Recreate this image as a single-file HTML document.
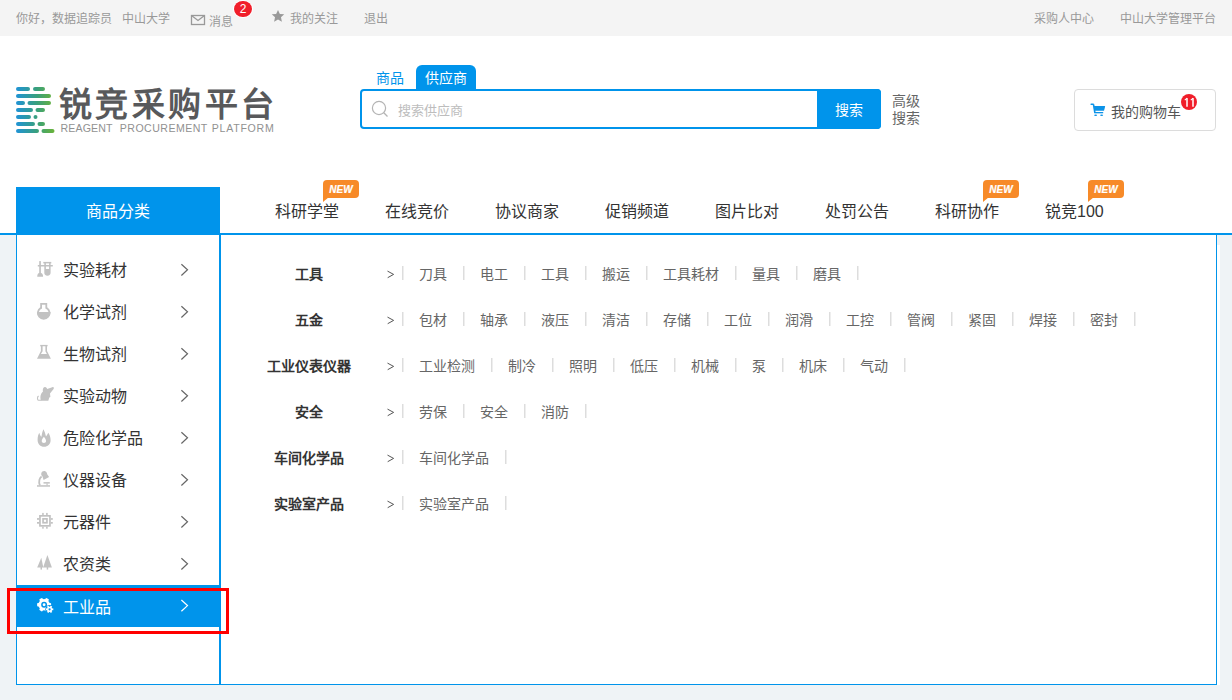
<!DOCTYPE html>
<html lang="zh-CN">
<head>
<meta charset="utf-8">
<style>
*{margin:0;padding:0;box-sizing:border-box}
html,body{width:1232px;height:700px;overflow:hidden}
body{position:relative;font-family:"Liberation Sans",sans-serif;background:#eff3f6;color:#333}
.a{position:absolute;white-space:nowrap}
#top{position:absolute;left:0;top:0;width:1232px;height:36px;background:#f4f4f4;font-size:12px;color:#999}
#top .a{line-height:17px}
#hdr{position:absolute;left:0;top:36px;width:1232px;height:197px;background:#fff}
#line{position:absolute;left:0;top:233px;width:1232px;height:2px;background:#0094eb}
.blue{background:#0094eb}
#side{position:absolute;left:16px;top:235px;width:204px;height:450px;background:#fff;border:1px solid #0094eb;border-top:0}
#main{position:absolute;left:220px;top:235px;width:997px;height:450px;background:#fff;border:1px solid #0094eb;border-top:0}
.nav{font-size:16px;color:#333;line-height:20px;top:202px}
.new{position:absolute;width:36px;height:18px;background:#f78a28;border-radius:4px 4px 4px 0;color:#fff;font:italic bold 10px/19px "Liberation Sans",sans-serif;text-align:center;top:180px;-webkit-text-stroke:0.2px #fff}
.new:after{content:"";position:absolute;left:0;top:17px;border-left:6px solid #f78a28;border-bottom:5px solid transparent}
.si{position:absolute;left:0;width:204px;height:42px}
.si .t{position:absolute;left:46px;top:12px;font-size:16px;line-height:20px;color:#333}
.si .ar{position:absolute;left:160px;top:14px;width:14px;height:14px}
.si .ic{position:absolute;left:15px;top:6px;width:26px;height:26px}
.row{position:absolute;left:0;height:20px;font-size:14px;line-height:20px}
.row .c{position:absolute;width:120px;left:28px;text-align:center;font-weight:bold;color:#333}
.row .gt{position:absolute;left:164px;top:0}
.row .its{position:absolute;left:181px;top:0;display:flex;color:#666;white-space:nowrap;width:900px}
.row .its span{padding:0 16px;position:relative;flex:none}
.row .its .s{width:1px;height:14px;background:#ddd;box-shadow:1px 0 0 #eee;padding:0;margin-top:2px;flex:none}
</style>
</head>
<body>
<div id="top">
  <div class="a" style="left:16px;top:11px">你好，数据追踪员</div>
  <div class="a" style="left:122px;top:11px">中山大学</div>
  <svg class="a" style="left:190px;top:13.5px" width="16" height="12" viewBox="0 0 16 12"><rect x="1.5" y="1.5" width="13" height="9" fill="none" stroke="#999" stroke-width="1.3"/><path d="M1.5 1.5 L8 6.5 L14.5 1.5" fill="none" stroke="#999" stroke-width="1.3"/></svg>
  <div class="a" style="left:209px;top:14px">消息</div>
  <div class="a" style="left:234px;top:0.5px;width:18px;height:16.5px;border-radius:50%;background:#f01e2a;box-shadow:0 0 0 1px #fff;color:#fff;text-align:center;line-height:17px;font-size:12px">2</div>
  <svg class="a" style="left:271px;top:8.5px" width="14" height="14" viewBox="0 0 24 24"><path d="M12 1.5l3.2 6.9 7.5.8-5.6 5.1 1.6 7.4L12 17.9l-6.7 3.8 1.6-7.4-5.6-5.1 7.5-.8z" fill="#999"/></svg>
  <div class="a" style="left:290px;top:11px">我的关注</div>
  <div class="a" style="left:364px;top:11px">退出</div>
  <div class="a" style="left:1034px;top:11px">采购人中心</div>
  <div class="a" style="left:1120px;top:11px">中山大学管理平台</div>
</div>
<div id="hdr">
  <svg class="a" style="left:14px;top:50px" width="44" height="50" viewBox="14 86 44 50">
    <defs><linearGradient id="g" x1="16" y1="0" x2="55" y2="0" gradientUnits="userSpaceOnUse"><stop offset="0" stop-color="#1f93d6"/><stop offset="0.55" stop-color="#3aa07a"/><stop offset="1" stop-color="#6cb436"/></linearGradient></defs>
    <g stroke="url(#g)" stroke-width="4" stroke-linecap="round" fill="none">
      <path d="M18 89H28M35 89H43"/>
      <path d="M18 96H49"/>
      <path d="M18 103H23M29.5 103H49"/>
      <path d="M18 110H31M37.5 110H43"/>
      <path d="M18 117H29M35.5 117H35.5"/>
      <path d="M18 124H33M39.5 124H43"/>
      <path d="M18 131H37M43.5 131H52.5"/>
    </g>
  </svg>
  <div class="a" style="left:59px;top:49px;font-size:33px;line-height:40px;font-weight:900;color:#58595b;letter-spacing:3.4px">锐竞采购平台</div>
  <div class="a" style="left:60.6px;top:86px;font-size:10.6px;line-height:12px;color:#919191;letter-spacing:0.12px">REAGENT</div>
  <div class="a" style="left:119.8px;top:86px;font-size:10.6px;line-height:12px;color:#919191;letter-spacing:0.45px">PROCUREMENT</div>
  <div class="a" style="left:211.8px;top:86px;font-size:10.6px;line-height:12px;color:#919191;letter-spacing:0.72px">PLATFORM</div>

  <div class="a" style="left:376px;top:32px;font-size:14px;line-height:20px;color:#0094eb">商品</div>
  <div class="a" style="left:416px;top:29px;width:60px;height:25px;background:#0094eb;border-radius:6px 6px 0 0"></div>
  <div class="a" style="left:425px;top:32px;font-size:14px;line-height:20px;color:#fff">供应商</div>
  <div class="a" style="left:360px;top:53px;width:521px;height:40px;border:2px solid #0094eb;border-radius:4px;background:#fff"></div>
  <div class="a" style="left:817px;top:53px;width:64px;height:40px;background:#0094eb;border-radius:0 4px 4px 0"></div>
  <div class="a" style="left:835px;top:64px;font-size:14px;line-height:20px;color:#fff">搜索</div>
  <svg class="a" style="left:371px;top:64px" width="18" height="18" viewBox="0 0 18 18"><circle cx="8" cy="8" r="6.6" fill="none" stroke="#b4b4b4" stroke-width="1.2"/><path d="M12.8 12.8L16.5 16.5" stroke="#b4b4b4" stroke-width="1.3"/></svg>
  <div class="a" style="left:398px;top:64.5px;font-size:13px;line-height:20px;color:#bdbdbd">搜索供应商</div>
  <div class="a" style="left:892px;top:57px;font-size:14px;line-height:17px;color:#666;white-space:normal;width:30px">高级<br>搜索</div>

  <div class="a" style="left:1074px;top:53px;width:142px;height:42px;border:1px solid #dcdcdc;border-radius:4px;background:#fff"></div>
  <svg class="a" style="left:1086px;top:62px" width="24" height="24" viewBox="0 0 24 24"><g fill="#0c93e8"><path d="M5.2 6.3H7.2" stroke="#0c93e8" stroke-width="1.6" stroke-linecap="round"/><path d="M7.5 6.3L8.9 14.8" stroke="#0c93e8" stroke-width="1.6"/><path d="M7.9 8.1H18.7C19.1 8.1 19.2 8.4 19.1 8.8L18 12.7H8.5Z"/><rect x="8.2" y="14" width="9" height="1.3"/><ellipse cx="9.6" cy="17.2" rx="1.5" ry="0.75"/><ellipse cx="15.6" cy="17.2" rx="1.5" ry="0.75"/></g></svg>
  <div class="a" style="left:1111px;top:66px;font-size:14px;line-height:20px;color:#555">我的购物车</div>
  <svg class="a" style="left:1181px;top:58px" width="16" height="16" viewBox="0 0 16 16"><circle cx="8" cy="8" r="8" fill="#f01e2a"/><path d="M6 4.2V12.8M12 4.2V12.8" stroke="#fff" stroke-width="1.5"/><path d="M3.8 6.2L6.2 4.2M9.8 6.2L12.2 4.2" stroke="#fff" stroke-width="1.1"/></svg>

  <div class="a blue" style="left:16px;top:151px;width:204px;height:48px"></div>
  <div class="a" style="left:86px;top:165px;font-size:16px;line-height:22px;color:#fff">商品分类</div>
</div>
<div class="a nav" style="left:275px">科研学堂</div>
<div class="a nav" style="left:385px">在线竞价</div>
<div class="a nav" style="left:495px">协议商家</div>
<div class="a nav" style="left:605px">促销频道</div>
<div class="a nav" style="left:715px">图片比对</div>
<div class="a nav" style="left:825px">处罚公告</div>
<div class="a nav" style="left:935px">科研协作</div>
<div class="a nav" style="left:1045px">锐竞100</div>
<div class="new" style="left:323px">NEW</div>
<div class="new" style="left:983px">NEW</div>
<div class="new" style="left:1088px">NEW</div>
<div id="line"></div>
<div class="a" style="left:1217px;top:245px;width:3px;height:440px;background:#fff"></div>
<div id="side">
  <div class="si" style="top:14px"><svg class="ic" width="26" height="26" viewBox="0 0 26 26"><rect x="7.2" y="6.1" width="1.7" height="13" fill="#c2c2c2"/><path d="M5.2 21.7H11.1C11.1 19.3 9.9 17.8 8.05 17.8C6.3 17.8 5.2 19.3 5.2 21.7Z" fill="#c2c2c2"/><rect x="5.8" y="10" width="15" height="1.5" fill="#c2c2c2"/><rect x="11.3" y="6.9" width="8" height="1.5" fill="#c2c2c2"/><path d="M12.3 7.4V17.6A3.15 3.15 0 0 0 18.6 17.6V7.4H17.1V13.9H13.9V7.4Z" fill="#c2c2c2"/></svg><div class="t">实验耗材</div><svg class="ar" width="14" height="14" viewBox="0 0 14 14"><path d="M4.4 1.2L10.5 6.8L4.4 12.5" fill="none" stroke="#666" stroke-width="1.2"/></svg></div>
  <div class="si" style="top:56px"><svg class="ic" width="26" height="26" viewBox="0 0 26 26"><path d="M8.2 5.9H15.2V10.2A6.75 6.75 0 1 1 8.2 10.2Z" fill="#c2c2c2"/><path d="M10 7.7H13.4V11.4A4.95 4.95 0 1 1 10 11.4Z" fill="#fff"/><path d="M5.2 14.9A6.7 6.7 0 0 0 18.6 14.9Z" fill="#c2c2c2"/></svg><div class="t">化学试剂</div><svg class="ar" width="14" height="14" viewBox="0 0 14 14"><path d="M4.4 1.2L10.5 6.8L4.4 12.5" fill="none" stroke="#666" stroke-width="1.2"/></svg></div>
  <div class="si" style="top:98px"><svg class="ic" width="26" height="26" viewBox="0 0 26 26"><rect x="8.2" y="5.9" width="7.4" height="1.4" fill="#c2c2c2"/><path d="M8.9 7H15V11.9L18.9 19.7H5L8.9 11.9Z" fill="#c2c2c2"/><path d="M10.6 7.2H13.4V12.2L14.9 14.9H8.9L10.6 12.2Z" fill="#fff"/></svg><div class="t">生物试剂</div><svg class="ar" width="14" height="14" viewBox="0 0 14 14"><path d="M4.4 1.2L10.5 6.8L4.4 12.5" fill="none" stroke="#666" stroke-width="1.2"/></svg></div>
  <div class="si" style="top:140px"><svg class="ic" width="26" height="26" viewBox="0 0 26 26"><path d="M9 19.7C8 17 8.2 12.8 11 10.6C10.4 8.6 11 6.1 12.8 5.9C14.3 5.8 14.9 7 15.1 8L20.3 6.2C21.8 5.8 22.2 6.9 21.6 7.9L18 12.6L18.4 16L17.3 16.6L16.3 19.7Z" fill="#c2c2c2"/><path d="M9.2 19.3H6.6C5.2 19 5 16 6.6 15.1" fill="none" stroke="#c2c2c2" stroke-width="1.1"/></svg><div class="t">实验动物</div><svg class="ar" width="14" height="14" viewBox="0 0 14 14"><path d="M4.4 1.2L10.5 6.8L4.4 12.5" fill="none" stroke="#666" stroke-width="1.2"/></svg></div>
  <div class="si" style="top:182px"><svg class="ic" width="26" height="26" viewBox="0 0 26 26"><path d="M5.6 17C5.6 13.2 6.4 11.2 7.4 9.7C7.8 11.8 8.5 13.1 9.5 13.8C9.9 10.6 10.5 8.1 11.5 6.3C12.6 8.5 13.5 11 14 13.4C14.8 12.4 15.6 11 16.3 9.7C17.6 11.5 18.6 14 18.6 17.5C18.6 21.2 15.7 23.8 12.1 23.8C8.5 23.8 5.6 21.1 5.6 17Z" fill="#c2c2c2"/><path d="M11.9 13.7C12.8 15 14.1 16.5 14.1 18C14.1 19.2 13.1 20 11.9 20C10.7 20 9.7 19.2 9.7 18C9.7 16.5 11 15 11.9 13.7Z" fill="#fff"/></svg><div class="t">危险化学品</div><svg class="ar" width="14" height="14" viewBox="0 0 14 14"><path d="M4.4 1.2L10.5 6.8L4.4 12.5" fill="none" stroke="#666" stroke-width="1.2"/></svg></div>
  <div class="si" style="top:224px"><svg class="ic" width="26" height="26" viewBox="0 0 26 26"><path d="M9.3 8.2C9.8 6.3 11.6 5.6 13.2 6.2C14.6 6.8 15 7.8 15.2 9.2L17.1 12.1L11.6 14.9L10.5 11.6C9.4 10.6 9 9.4 9.3 8.2Z" fill="#c2c2c2"/><path d="M9.6 11.4C7.5 12.8 6.3 16.5 7.9 20.4" fill="none" stroke="#c2c2c2" stroke-width="1.8"/><rect x="11.5" y="17.1" width="6.3" height="1.5" fill="#c2c2c2"/><rect x="14.5" y="18.4" width="1.1" height="2" fill="#c2c2c2"/><rect x="5" y="20.2" width="13" height="1.5" fill="#c2c2c2"/></svg><div class="t">仪器设备</div><svg class="ar" width="14" height="14" viewBox="0 0 14 14"><path d="M4.4 1.2L10.5 6.8L4.4 12.5" fill="none" stroke="#666" stroke-width="1.2"/></svg></div>
  <div class="si" style="top:266px"><svg class="ic" width="26" height="26" viewBox="0 0 26 26"><rect x="7.95" y="8.85" width="10" height="10" fill="none" stroke="#c2c2c2" stroke-width="1.7"/><rect x="11.05" y="11.85" width="3.9" height="3.9" fill="none" stroke="#c2c2c2" stroke-width="1.7"/><rect x="10.2" y="5.9" width="1.5" height="2.2" fill="#c2c2c2"/><rect x="14.1" y="5.9" width="1.6" height="2.2" fill="#c2c2c2"/><rect x="10.2" y="19.6" width="1.5" height="2.1" fill="#c2c2c2"/><rect x="14.1" y="19.6" width="1.6" height="2.1" fill="#c2c2c2"/><rect x="5" y="11.1" width="2.2" height="1.7" fill="#c2c2c2"/><rect x="5" y="15" width="2.2" height="1.7" fill="#c2c2c2"/><rect x="18.7" y="11.1" width="2.1" height="1.7" fill="#c2c2c2"/><rect x="18.7" y="15" width="2.1" height="1.7" fill="#c2c2c2"/></svg><div class="t">元器件</div><svg class="ar" width="14" height="14" viewBox="0 0 14 14"><path d="M4.4 1.2L10.5 6.8L4.4 12.5" fill="none" stroke="#666" stroke-width="1.2"/></svg></div>
  <div class="si" style="top:308px"><svg class="ic" width="26" height="26" viewBox="0 0 26 26"><path d="M9.3 8.7L11.3 18.6H5.2Z" fill="#c2c2c2"/><rect x="8.5" y="18" width="1.5" height="2.6" fill="#c2c2c2"/><path d="M15.4 6.1L19.9 18.6H11.1Z" fill="#c2c2c2"/><rect x="14.7" y="18" width="1.5" height="2.6" fill="#c2c2c2"/></svg><div class="t">农资类</div><svg class="ar" width="14" height="14" viewBox="0 0 14 14"><path d="M4.4 1.2L10.5 6.8L4.4 12.5" fill="none" stroke="#666" stroke-width="1.2"/></svg></div>
</div>
<div id="main">
  <div class="row" style="top:29px"><div class="c">工具</div><svg class="gt" width="12" height="20" viewBox="0 0 12 20"><path d="M2.5 7.1L8.6 10.4L2.7 13.7" fill="none" stroke="#444" stroke-width="0.9"/></svg><div class="its"><i class="s"></i><span>刀具</span><i class="s"></i><span>电工</span><i class="s"></i><span>工具</span><i class="s"></i><span>搬运</span><i class="s"></i><span>工具耗材</span><i class="s"></i><span>量具</span><i class="s"></i><span>磨具</span><i class="s"></i></div></div>
  <div class="row" style="top:75px"><div class="c">五金</div><svg class="gt" width="12" height="20" viewBox="0 0 12 20"><path d="M2.5 7.1L8.6 10.4L2.7 13.7" fill="none" stroke="#444" stroke-width="0.9"/></svg><div class="its"><i class="s"></i><span>包材</span><i class="s"></i><span>轴承</span><i class="s"></i><span>液压</span><i class="s"></i><span>清洁</span><i class="s"></i><span>存储</span><i class="s"></i><span>工位</span><i class="s"></i><span>润滑</span><i class="s"></i><span>工控</span><i class="s"></i><span>管阀</span><i class="s"></i><span>紧固</span><i class="s"></i><span>焊接</span><i class="s"></i><span>密封</span><i class="s"></i></div></div>
  <div class="row" style="top:121px"><div class="c">工业仪表仪器</div><svg class="gt" width="12" height="20" viewBox="0 0 12 20"><path d="M2.5 7.1L8.6 10.4L2.7 13.7" fill="none" stroke="#444" stroke-width="0.9"/></svg><div class="its"><i class="s"></i><span>工业检测</span><i class="s"></i><span>制冷</span><i class="s"></i><span>照明</span><i class="s"></i><span>低压</span><i class="s"></i><span>机械</span><i class="s"></i><span>泵</span><i class="s"></i><span>机床</span><i class="s"></i><span>气动</span><i class="s"></i></div></div>
  <div class="row" style="top:167px"><div class="c">安全</div><svg class="gt" width="12" height="20" viewBox="0 0 12 20"><path d="M2.5 7.1L8.6 10.4L2.7 13.7" fill="none" stroke="#444" stroke-width="0.9"/></svg><div class="its"><i class="s"></i><span>劳保</span><i class="s"></i><span>安全</span><i class="s"></i><span>消防</span><i class="s"></i></div></div>
  <div class="row" style="top:213px"><div class="c">车间化学品</div><svg class="gt" width="12" height="20" viewBox="0 0 12 20"><path d="M2.5 7.1L8.6 10.4L2.7 13.7" fill="none" stroke="#444" stroke-width="0.9"/></svg><div class="its"><i class="s"></i><span>车间化学品</span><i class="s"></i></div></div>
  <div class="row" style="top:259px"><div class="c">实验室产品</div><svg class="gt" width="12" height="20" viewBox="0 0 12 20"><path d="M2.5 7.1L8.6 10.4L2.7 13.7" fill="none" stroke="#444" stroke-width="0.9"/></svg><div class="its"><i class="s"></i><span>实验室产品</span><i class="s"></i></div></div>
</div>
<div class="a blue" style="left:16px;top:585px;width:205px;height:42px"></div>
<svg class="a" style="left:32px;top:591px" width="26" height="26" viewBox="0 0 26 26"><g fill="#fff" transform="translate(12.1 13.7)"><circle r="5.7"/><rect x="-1.8" y="-7" width="3.6" height="3" rx="0.9" transform="rotate(30)"/><rect x="-1.8" y="-7" width="3.6" height="3" rx="0.9" transform="rotate(90)"/><rect x="-1.8" y="-7" width="3.6" height="3" rx="0.9" transform="rotate(150)"/><rect x="-1.8" y="-7" width="3.6" height="3" rx="0.9" transform="rotate(210)"/><rect x="-1.8" y="-7" width="3.6" height="3" rx="0.9" transform="rotate(270)"/><rect x="-1.8" y="-7" width="3.6" height="3" rx="0.9" transform="rotate(330)"/></g><circle cx="12.1" cy="13.7" r="2.2" fill="none" stroke="#0094eb" stroke-width="1.5"/><circle cx="17.6" cy="18.3" r="4.3" fill="#0094eb"/><g fill="#fff" transform="translate(17.6 18.3)"><circle r="2.6"/><rect x="-0.9" y="-3.7" width="1.8" height="1.6" transform="rotate(30)"/><rect x="-0.9" y="-3.7" width="1.8" height="1.6" transform="rotate(90)"/><rect x="-0.9" y="-3.7" width="1.8" height="1.6" transform="rotate(150)"/><rect x="-0.9" y="-3.7" width="1.8" height="1.6" transform="rotate(210)"/><rect x="-0.9" y="-3.7" width="1.8" height="1.6" transform="rotate(270)"/><rect x="-0.9" y="-3.7" width="1.8" height="1.6" transform="rotate(330)"/></g><circle cx="17.6" cy="18.3" r="1.1" fill="#0094eb"/></svg>
<div class="a" style="left:63px;top:598px;font-size:16px;line-height:20px;color:#fff">工业品</div>
<svg class="a" style="left:177px;top:599px" width="14" height="14" viewBox="0 0 14 14"><path d="M4.4 1L10.5 6.6L4.4 12.3" fill="none" stroke="#fff" stroke-width="1.2"/></svg>
<div class="a" style="left:7px;top:588px;width:222px;height:46px;border:3px solid #f00"></div>
</body>
</html>
